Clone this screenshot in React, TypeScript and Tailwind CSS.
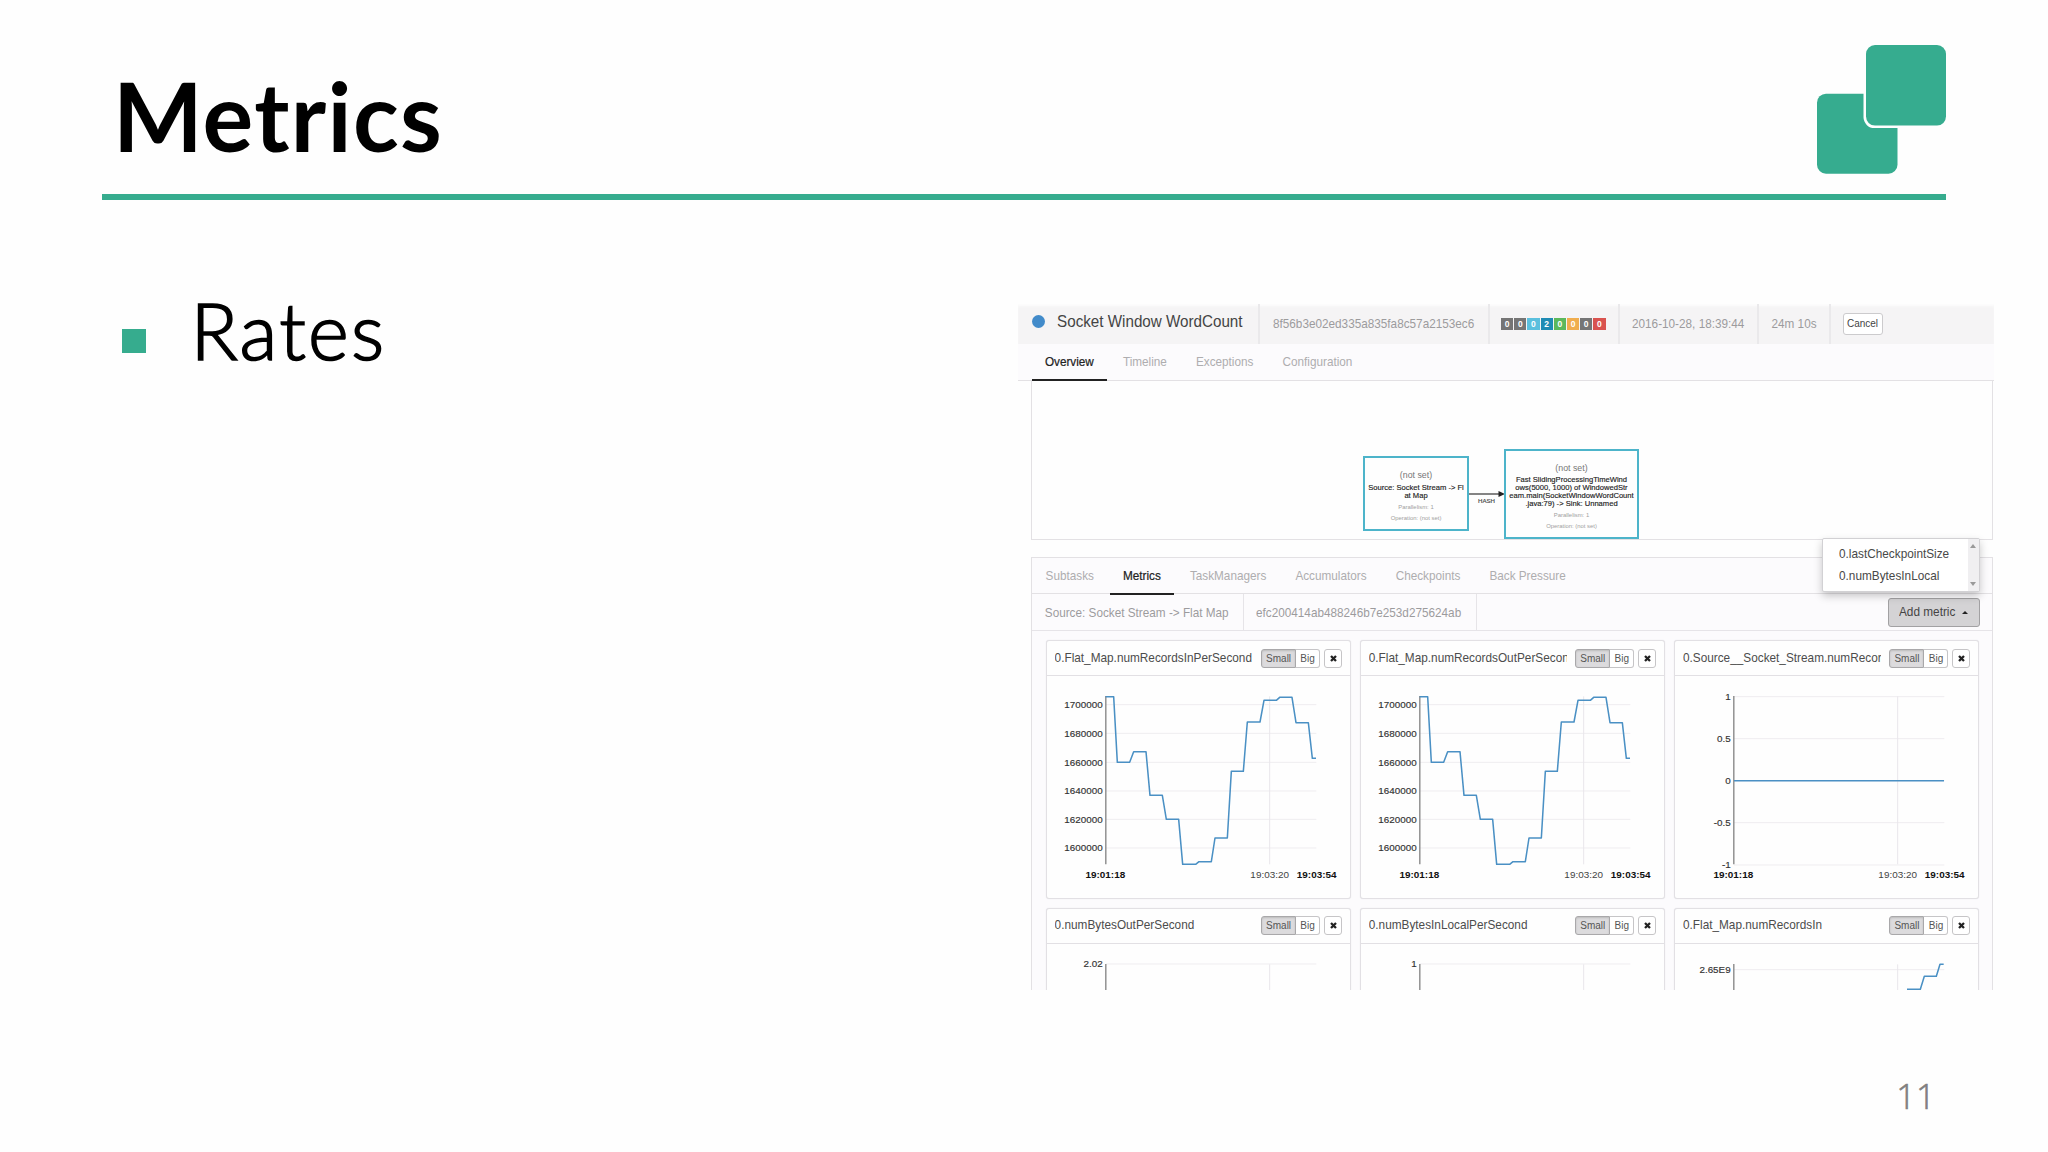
import React from "react";

const tabText = "inline-block origin-center scale-y-[1.08]";

const HEX_JOB = "8f56b3e02ed335a835fa8c57a2153ec6";
const HEX_VERTEX = "efc200414ab488246b7e253d275624ab";

const badges = [
  { n: 0, c: "bg-[#757575]" },
  { n: 0, c: "bg-[#757575]" },
  { n: 0, c: "bg-[#5bc0de]" },
  { n: 2, c: "bg-[#1f8bb4]" },
  { n: 0, c: "bg-[#5cb85c]" },
  { n: 0, c: "bg-[#f0ad4e]" },
  { n: 0, c: "bg-[#757575]" },
  { n: 0, c: "bg-[#d9534f]" },
];

type Tick = { label: string; y: number };
type Metric = { title: string; ticks: Tick[]; line?: string };

const RATE_LINE =
  "256,200 280,200 291,397 328,397 340,365 377,365 389,496 426,496 438,568 475,568 487,703 526,703 536,695 573,695 584,624 621,624 633,424 669,424 681,276 719,276 731,211 768,211 778,202 815,202 827,278 864,278 876,385 887,385";

const rateTicks: Tick[] = [
  { label: "1700000", y: 224 },
  { label: "1680000", y: 310 },
  { label: "1660000", y: 397 },
  { label: "1640000", y: 483 },
  { label: "1620000", y: 568 },
  { label: "1600000", y: 654 },
];

const metrics: Metric[] = [
  { title: "0.Flat_Map.numRecordsInPerSecond", ticks: rateTicks, line: RATE_LINE },
  { title: "0.Flat_Map.numRecordsOutPerSecond", ticks: rateTicks, line: RATE_LINE },
  {
    title: "0.Source__Socket_Stream.numRecordsOut",
    ticks: [
      { label: "1", y: 200 },
      { label: "0.5", y: 326 },
      { label: "0", y: 452 },
      { label: "-0.5", y: 578 },
      { label: "-1", y: 705 },
    ],
    line: "257,452 887,452",
  },
  { title: "0.numBytesOutPerSecond", ticks: [{ label: "2.02", y: 198 }] },
  { title: "0.numBytesInLocalPerSecond", ticks: [{ label: "1", y: 198 }] },
  {
    title: "0.Flat_Map.numRecordsIn",
    ticks: [{ label: "2.65E9", y: 215 }],
    line: "776,274 816,274 828,235 864,235 875,199 886,199",
  },
];

function Chart({ m }: { m: Metric }) {
  return (
    <svg viewBox="77 135 915 669" className="block h-[223px] w-[305px]" fontFamily="Liberation Sans, sans-serif">
      {m.ticks.map((t) => (
        <line key={t.label} x1="257" x2="888" y1={t.y} y2={t.y} stroke="#efedf0" strokeWidth="3" />
      ))}
      <line x1="748" x2="748" y1="199" y2="703" stroke="#e9e7eb" strokeWidth="3" />
      <line x1="256.5" x2="256.5" y1="198" y2="703" stroke="#777" strokeWidth="3.6" />
      {m.line && <polyline points={m.line} fill="none" stroke="#4a90c4" strokeWidth="4.6" strokeLinejoin="round" />}
      {m.ticks.map((t) => (
        <text key={t.label} transform={`translate(247 ${t.y + 10}) scale(1 .93)`} textAnchor="end" fontSize="29.6" fill="#333" stroke="#333" strokeWidth=".5">
          {t.label}
        </text>
      ))}
      <g fontSize="29.8" textAnchor="middle" fill="#111">
        <text transform="translate(255 745) scale(1 .93)" fontWeight="700">19:01:18</text>
        <text transform="translate(748 745) scale(1 .93)" fill="#444">19:03:20</text>
        <text transform="translate(889 745) scale(1 .93)" fontWeight="700">19:03:54</text>
      </g>
    </svg>
  );
}

function MetricCard({ m }: { m: Metric }) {
  return (
    <div className="h-[259px] w-[305px] shrink-0 overflow-hidden rounded-[3px] border border-[#e2e0e4] bg-[#fefefe] shadow-[0_0_1px_#dddbe0]">
      <div className="flex h-[35px] items-center border-b border-[#e2e0e4] pl-[8px]">
        <div className="mr-[8.5px] w-[198px] overflow-hidden whitespace-nowrap pt-px text-[11.8px] text-[#4c4c4c]">
          <span className={tabText}>{m.title}</span>
        </div>
        <div className="flex h-[19px] text-[10px] leading-[17px] text-[#555]">
          <span className="w-[35px] rounded-l-[3px] border border-[#a9a8aa] bg-[#dcdbdd] text-center shadow-[inset_0_1px_2px_#bbb]">Small</span>
          <span className="w-[24px] rounded-r-[3px] border border-l-0 border-[#c6c5c7] bg-white text-center">Big</span>
          <span className="ml-[4px] flex w-[18px] items-center justify-center rounded-[3px] border border-[#c6c5c7] bg-white">
            <svg viewBox="0 0 14 14" className="size-[7px]" stroke="#222" strokeWidth="4.6">
              <path d="M2 2 12 12M12 2 2 12" />
            </svg>
          </span>
        </div>
      </div>
      <div className="-mt-px -ml-px">
        <Chart m={m} />
      </div>
    </div>
  );
}

function Tabs({ items, active }: { items: string[]; active: string }) {
  return (
    <div className="flex gap-[2.7px] text-[11.75px]">
      {items.map((t) => (
        <div
          key={t}
          className={
            t === active
              ? "relative z-10 -mb-px flex h-[37px] items-center border-b-2 border-[#222] px-[13.2px] text-[#222]"
              : "flex h-[36px] items-center px-[13.2px] text-[#aeadaf]"
          }
        >
          <span className={t === active ? "inline-block scale-y-[1.08] [-webkit-text-stroke:0.2px_#222]" : tabText}>{t}</span>
        </div>
      ))}
    </div>
  );
}

function JobHeader() {
  const cell = "flex items-center border-r-2 border-[#eae9eb] pb-px";
  return (
    <div className="flex h-[40px] bg-[#f5f4f5] text-[11.75px] text-[#9c9b9d] shadow-[inset_0_3px_3px_-1px_#fdfdfd]">
      <div className={`${cell} w-[242px] pl-[13.5px]`}>
        <span className="mt-[-4px] size-[13px] rounded-full bg-[#428bca]" />
        <span className="mt-[-3px] ml-[12.6px] inline-block text-[15.2px] text-[#444] scale-y-[1.05]">Socket Window WordCount</span>
      </div>
      <div className={`${cell} w-[230px] pl-[13px]`}>
        <span className={tabText}>{HEX_JOB}</span>
      </div>
      <div className={`${cell} w-[130px] pl-[11px] pt-px`}>
        <div className="flex gap-px text-[8.5px] font-bold leading-[12px] text-white">
          {badges.map((b, i) => (
            <span key={i} className={`h-[12px] w-[12.2px] text-center ${b.c}`}>{b.n}</span>
          ))}
        </div>
      </div>
      <div className={`${cell} w-[139px] pl-[12px]`}>
        <span className={tabText}>2016-10-28, 18:39:44</span>
      </div>
      <div className={`${cell} w-[72px] pl-[12.5px]`}>
        <span className={tabText}>24m 10s</span>
      </div>
      <div className="flex items-center pl-[11.5px]">
        <span className="h-[22px] w-[40px] rounded-[3px] border border-[#cccbcd] bg-white text-center text-[10px] leading-[20px] text-[#444]">Cancel</span>
      </div>
    </div>
  );
}

function PlanNode({ className, lines }: { className: string; lines: string[] }) {
  return (
    <div className={`absolute flex flex-col items-center border-[2.5px] border-[#4db4ca] bg-[#fefefe] whitespace-nowrap ${className}`}>
      <div className="text-[8.8px] leading-[10px] text-[#777]">(not set)</div>
      <div className="mt-[3.5px] text-center text-[7.6px] leading-[8px] text-[#222] [-webkit-text-stroke:0.15px_#222]">
        {lines.map((l) => (
          <div key={l}>{l}</div>
        ))}
      </div>
      <div className="mt-[4px] text-[5.9px] leading-[7px] text-[#a0a0a0]">Parallelism: 1</div>
      <div className="mt-[4px] text-[5.9px] leading-[7px] text-[#a0a0a0]">Operation: (not set)</div>
    </div>
  );
}

function Plan() {
  return (
    <div className="relative ml-[13px] h-[160px] w-[962px] border border-[#e3e1e4] bg-[#fefefe]">
      <PlanNode className="left-[331px] top-[75px] h-[75px] w-[106px] pt-[12px]" lines={["Source: Socket Stream -> Fl", "at Map"]} />
      <svg viewBox="0 0 36 10" className="absolute left-[437px] top-[108px] h-[10px] w-[36px]">
        <path d="M0 5H30" stroke="#333" strokeWidth="1.2" />
        <path d="M29.5 2 36 5 29.5 8Z" fill="#222" />
      </svg>
      <div className="absolute left-[446px] top-[116px] text-[6.1px] leading-[7px] text-[#444] [-webkit-text-stroke:0.15px_#444]">HASH</div>
      <PlanNode
        className="left-[472px] top-[67.5px] h-[90.5px] w-[135px] pt-[12px]"
        lines={["Fast SlidingProcessingTimeWind", "ows(5000, 1000) of WindowedStr", "eam.main(SocketWindowWordCount", ".java:79) -> Sink: Unnamed"]}
      />
    </div>
  );
}

function MetricMenu() {
  return (
    <div className="absolute right-[12.5px] top-[-20px] z-20 flex h-[54px] w-[158px] justify-between rounded-[2px] border border-[#d2d1d4] bg-white text-[11.8px] text-[#484848] shadow-[0_4px_8px_rgba(0,0,0,0.22)]">
      <div className="pl-[16.5px] pt-[3.5px] leading-[22px]">
        <div className="scale-y-[1.08]">0.lastCheckpointSize</div>
        <div className="scale-y-[1.08]">0.numBytesInLocal</div>
      </div>
      <div className="flex w-[11px] flex-col items-center justify-between bg-[#f0eff1] py-[5px]">
        <span className="border-x-[3px] border-b-[4px] border-x-transparent border-b-[#999]" />
        <span className="border-x-[3px] border-t-[4px] border-x-transparent border-t-[#999]" />
      </div>
    </div>
  );
}

function Dashboard() {
  return (
    <div className="h-[686px] w-[976px] overflow-hidden bg-[#fefefe] font-['Liberation_Sans',sans-serif]">
      <JobHeader />
      <div className="h-[36px] bg-[#fcfbfd] pl-[13.7px]">
        <Tabs items={["Overview", "Timeline", "Exceptions", "Configuration"]} active="Overview" />
      </div>
      <div className="relative z-0 border-t border-[#e3e1e4] [&>div]:-mt-px">
        <Plan />
      </div>
      <div className="relative ml-[13px] mt-[17px] h-[460px] w-[962px] border border-[#e3e1e4] bg-[#fcfbfd]">
        <MetricMenu />
        <div className="h-[36px] border-b border-[#e3e1e4] pl-[0.4px]">
          <Tabs items={["Subtasks", "Metrics", "TaskManagers", "Accumulators", "Checkpoints", "Back Pressure"]} active="Metrics" />
        </div>
        <div className="flex h-[37px] border-b border-[#e6e4e8] text-[11.75px] text-[#9c9b9d]">
          <div className="flex w-[211.5px] items-center border-r border-[#e6e4e8] pl-[12.8px] pt-px">
            <span className={tabText}>{"Source: Socket Stream -> Flat Map"}</span>
          </div>
          <div className="flex w-[233px] items-center border-r border-[#e6e4e8] pl-[12.5px] pt-px">
            <span className={tabText}>{HEX_VERTEX}</span>
          </div>
          <div className="mt-[4px] mr-[12px] ml-auto flex h-[29px] w-[92px] items-center rounded-[3px] border border-[#a2a1a3] bg-[#d4d3d5] pl-[10px] text-[11.8px] text-[#444]">
            <span className={tabText}>Add metric</span>
            <span className="ml-[7px] border-x-[3px] border-b-[3.5px] border-x-transparent border-b-[#222]" />
          </div>
        </div>
        <div className="grid grid-cols-[305px_305px_305px] gap-x-[9.2px] gap-y-[8.5px] pl-[13.6px] pt-[9px]">
          {metrics.map((m) => (
            <MetricCard key={m.title} m={m} />
          ))}
        </div>
      </div>
    </div>
  );
}

export default function App() {
  return (
    <main className="flex h-[1152px] w-[2048px] flex-col overflow-hidden bg-[#fefefe] font-[Lato,sans-serif]">
      <header className="mx-[102px] flex h-[200px] w-[1844px] shrink-0 justify-between border-b-[6px] border-[#36ac8e]">
        <h1 className="mt-[58px] ml-[11px] text-[95px] font-bold leading-[114px] tracking-[1.3px] text-black">Metrics</h1>
        <svg viewBox="0 0 130 130" className="mt-[45px] size-[130px]">
          <rect x="1" y="48.7" width="80.5" height="80" rx="9" fill="#36ac8f" />
          <rect x="47.5" y="-2.5" width="85" height="85.6" rx="11" fill="#fefefe" />
          <rect x="50" y="0" width="80" height="80.6" rx="9" fill="#36ac8f" />
        </svg>
      </header>
      <div className="flex h-[790px] shrink-0">
        <section className="flex w-[1018px] shrink-0 pl-[122px] pt-[86px]">
          <span className="mt-[43px] size-[24px] bg-[#36ac8e]" />
          <p className="-mt-[3px] ml-[44.5px] text-[78px] font-light leading-[94px] tracking-[2.3px] text-black [-webkit-text-stroke:1.7px_#000]">Rates</p>
        </section>
        <section className="pt-[104px]">
          <Dashboard />
        </section>
      </div>
      <footer className="flex grow justify-end pr-[112px] pt-[82px] font-['Open_Sans',sans-serif] text-[34px] font-light leading-[48px] tracking-[0.5px] text-[#808080] [-webkit-text-stroke:0.6px_#808080]">
        <span>11</span>
      </footer>
    </main>
  );
}
